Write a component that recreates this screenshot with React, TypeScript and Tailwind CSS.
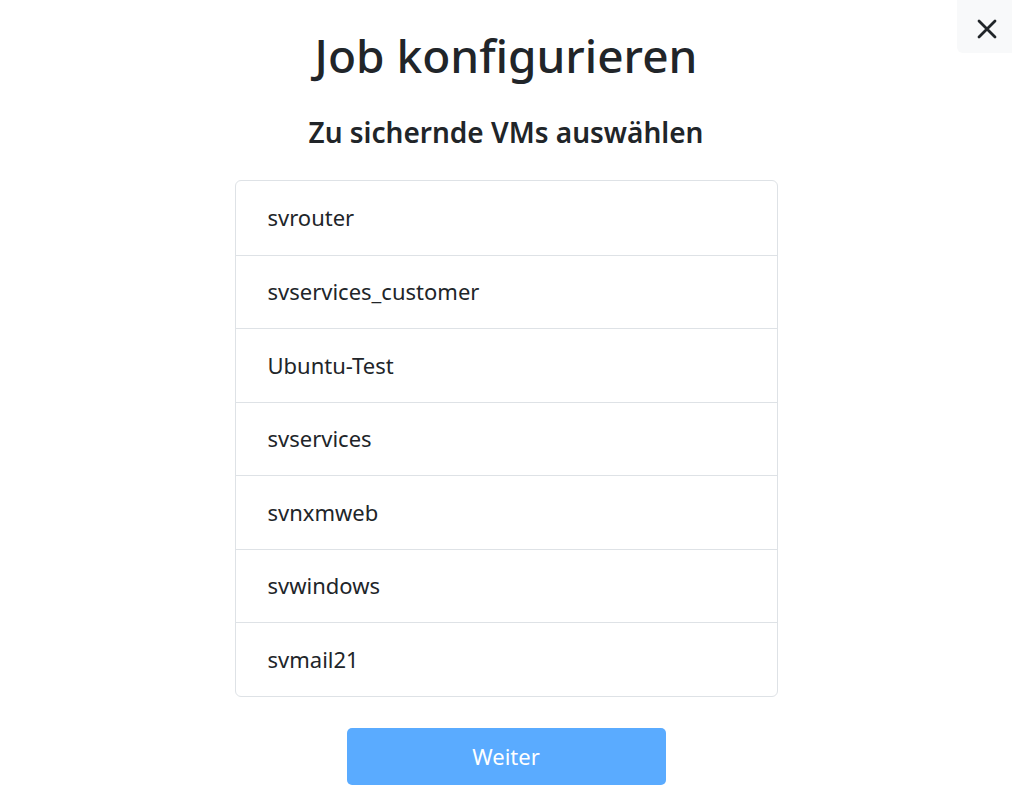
import React from 'react';

const vms = [
  'svrouter',
  'svservices_customer',
  'Ubuntu-Test',
  'svservices',
  'svnxmweb',
  'svwindows',
  'svmail21',
];

export default function App() {
  return (
    <div
      className="relative min-h-[807px] w-full bg-white text-[#212529]"
      style={{ fontFamily: '"Noto Sans", "Open Sans", sans-serif' }}
    >
      {/* Close */}
      <button className="absolute right-0 top-0 flex h-[53px] w-[55px] items-center justify-center rounded-bl-md bg-[#f8f9fa] pl-[4px] pt-[4px]">
        <svg width="22" height="22" viewBox="0 0 22 22" fill="none" stroke="#212529" strokeWidth="2.8" strokeLinecap="round">
          <path d="M3 3 L19 19 M19 3 L3 19" />
        </svg>
      </button>

      <div className="flex flex-col items-center pt-[24px]">
        <h1 className="text-[46px] font-medium leading-[62px]">Job konfigurieren</h1>
        <h3 className="mt-[29px] text-[28px] font-semibold leading-[34px]">Zu sichernde VMs auswählen</h3>

        <ul className="mt-[31px] w-[543px] rounded-md border border-[#dee2e6]">
          {vms.map((vm, i) => (
            <li
              key={vm}
              className={`flex h-[73.5px] items-center px-8 text-[22px] ${i > 0 ? 'border-t border-[#dee2e6]' : ''}`}
            >
              {vm}
            </li>
          ))}
        </ul>

        <button className="mt-[31px] h-[57px] w-[319px] rounded-[5px] bg-[#5aabff] text-[22px] text-white">
          Weiter
        </button>
      </div>
    </div>
  );
}
